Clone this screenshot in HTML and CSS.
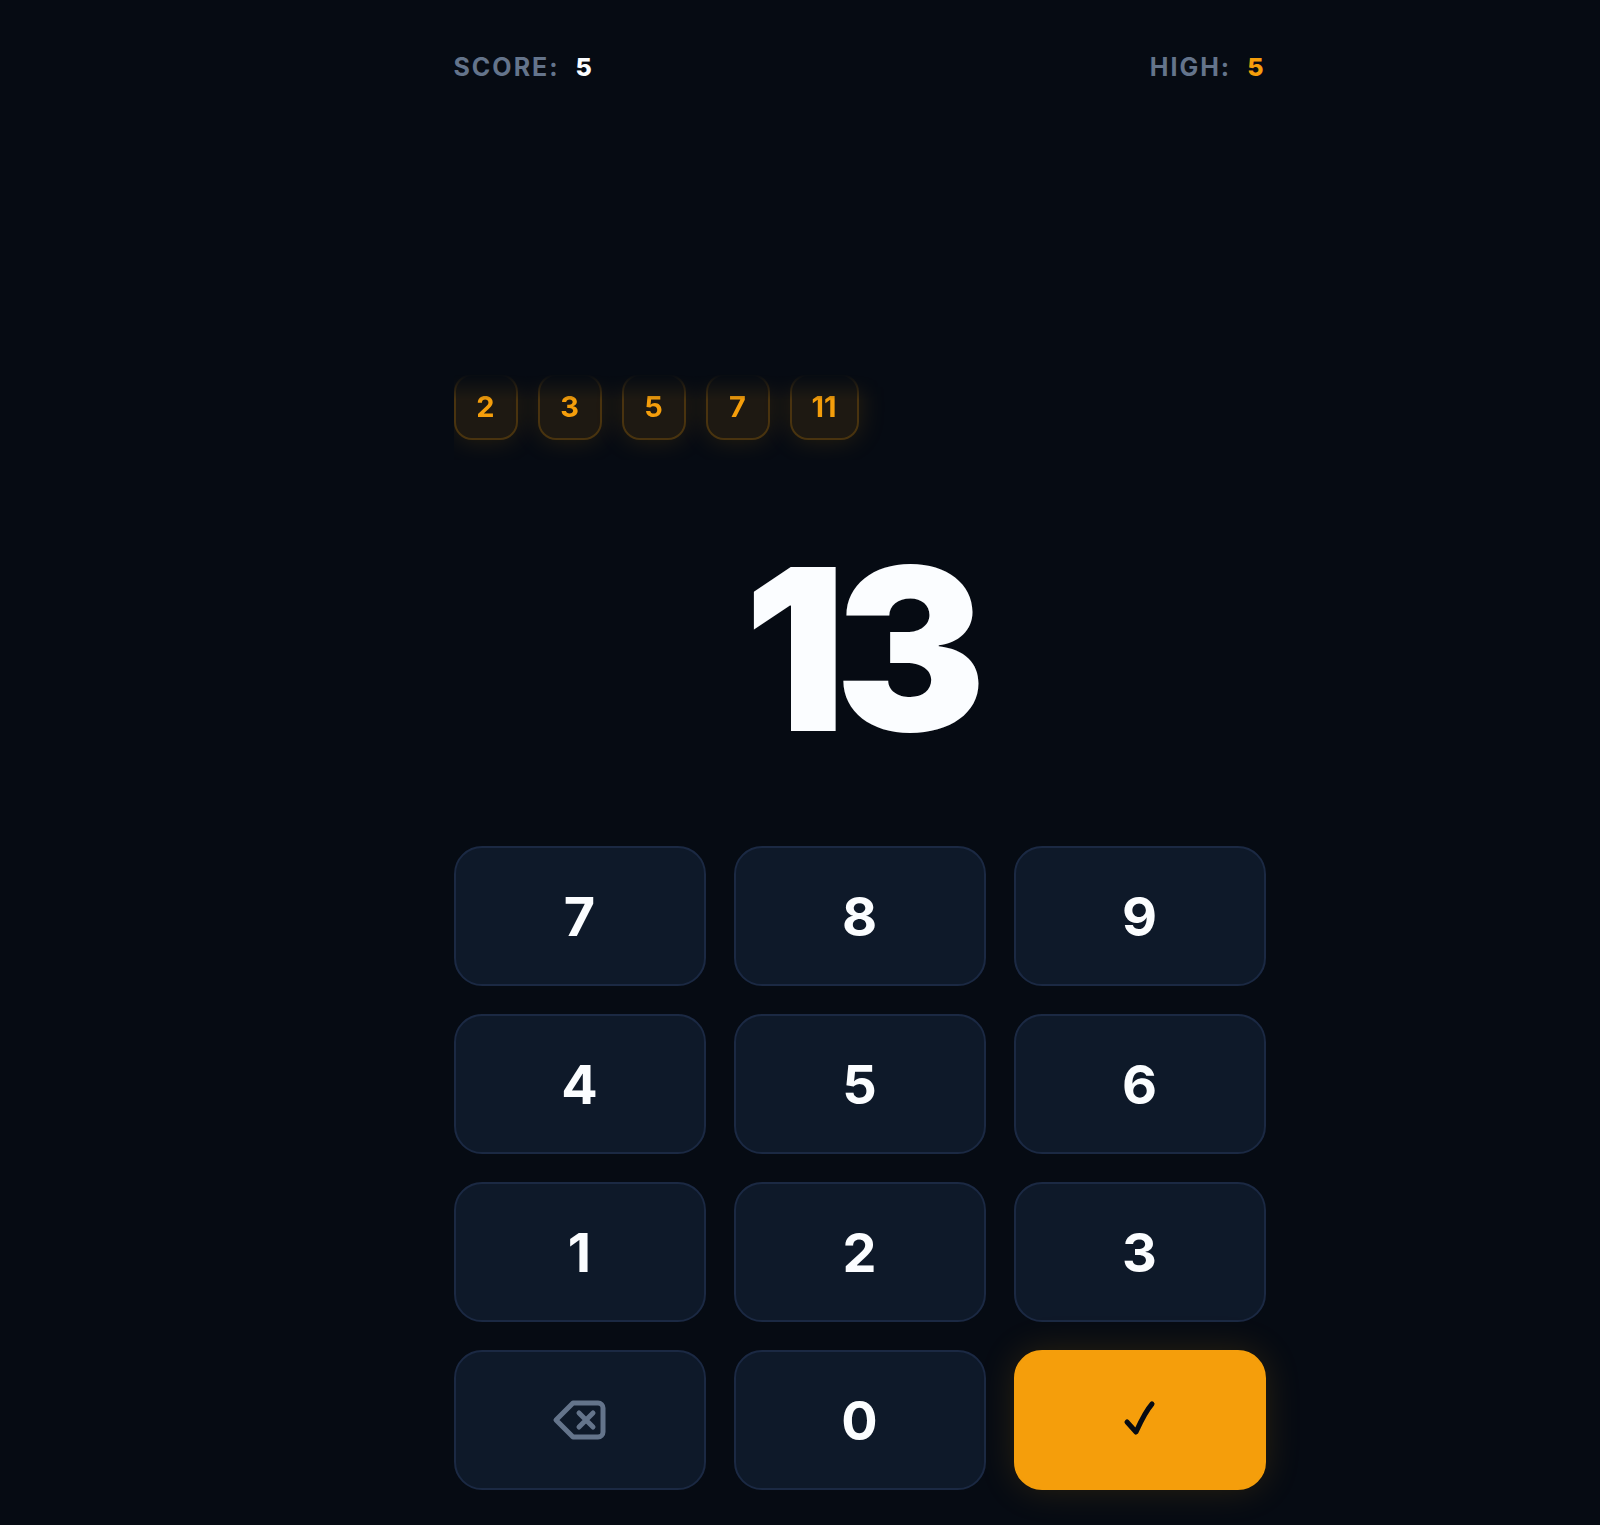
FILE: index.html
```
<!DOCTYPE html>
<html lang="en">
<head>
    <meta charset="UTF-8">
    <meta name="viewport" content="width=device-width, initial-scale=1.0">
    <title>Primes</title>
    <link rel="stylesheet" href="styles.css">
</head>
<body>

<main class="game">
    <header class="scores">
        <p class="score">SCORE: <span class="score-value">5</span></p>
        <p class="score">HIGH: <span class="score-value high">5</span></p>
    </header>

    <ol class="history">
        <li class="chip">2</li>
        <li class="chip">3</li>
        <li class="chip">5</li>
        <li class="chip">7</li>
        <li class="chip">11</li>
    </ol>

    <output class="entry">13</output>

    <div class="keypad">
        <button type="button" class="key">7</button>
        <button type="button" class="key">8</button>
        <button type="button" class="key">9</button>
        <button type="button" class="key">4</button>
        <button type="button" class="key">5</button>
        <button type="button" class="key">6</button>
        <button type="button" class="key">1</button>
        <button type="button" class="key">2</button>
        <button type="button" class="key">3</button>
        <button type="button" class="key key-delete" aria-label="Delete">
            <svg class="icon" viewBox="0 0 56 56" fill="none" stroke="currentColor" stroke-width="5" stroke-linecap="round" stroke-linejoin="round">
                <path d="M21 11H46a5 5 0 0 1 5 5V40a5 5 0 0 1-5 5H21L4 28Z"/>
                <path d="M27 21L41 35M41 21L27 35"/>
            </svg>
        </button>
        <button type="button" class="key">0</button>
        <button type="button" class="key key-submit" aria-label="Submit">
            <svg class="icon" viewBox="0 0 56 56" fill="none" stroke="currentColor" stroke-width="5" stroke-linecap="round" stroke-linejoin="round">
                <path d="M15 30L24 40C29 29 33 20 40 12"/>
            </svg>
        </button>
    </div>
</main>

</body>
</html>
```
FILE: styles.css
```
* {
    box-sizing: border-box;
}
body {
    margin: 0;
    padding-left: 119px;
    min-height: 100vh;
    background: #060b13;
    color: #fbfdff;
    font-family: Inter, sans-serif;
}
.game {
    max-width: 812px;
    margin: 0 auto;
    padding: 52px 0 32px;
}
.scores {
    display: flex;
    justify-content: space-between;
}
.score {
    display: flex;
    gap: 16px;
    margin: 0;
    color: #64748b;
    font-size: 25px;
    font-weight: 700;
    line-height: 30px;
    letter-spacing: 2px;
}
.score-value {
    color: #fbfdff;
    font-weight: 800;
}
.high {
    color: #f59e0b;
}
.history {
    display: flex;
    flex-wrap: wrap;
    gap: 20px;
    margin: 292px 0 0;
    padding: 0 0 20px;
    list-style: none;
    overflow: hidden;
    -webkit-mask-image: linear-gradient(to bottom, transparent, #000 26px);
    mask-image: linear-gradient(to bottom, transparent, #000 26px);
}
.chip {
    min-width: 64px;
    padding: 0 20px;
    border: 2px solid rgba(245, 158, 11, 0.2);
    border-radius: 18px;
    background: rgba(245, 158, 11, 0.1);
    box-shadow: 0 0 28px rgba(245, 158, 11, 0.15);
    color: #f59e0b;
    font-size: 29px;
    font-weight: 700;
    line-height: 62px;
    text-align: center;
}
.entry {
    display: block;
    margin: 60px 0 68px;
    text-align: center;
    font-size: 226px;
    font-weight: 900;
    line-height: 258px;
    letter-spacing: -0.05em;
}
.keypad {
    display: grid;
    grid-template-columns: repeat(3, 1fr);
    gap: 28px;
}
.key {
    display: flex;
    align-items: center;
    justify-content: center;
    height: 140px;
    padding: 0;
    border: 2px solid #1b2943;
    border-radius: 28px;
    background: #0e1929;
    color: #fbfdff;
    font-family: inherit;
    font-size: 54px;
    font-weight: 700;
    cursor: pointer;
}
.key-delete {
    color: #64748b;
}
.key-submit {
    border-color: #f59e0b;
    background: #f59e0b;
    box-shadow: 0 0 36px rgba(245, 158, 11, 0.15);
    color: #060b13;
}
.icon {
    width: 56px;
    height: 56px;
}
```
